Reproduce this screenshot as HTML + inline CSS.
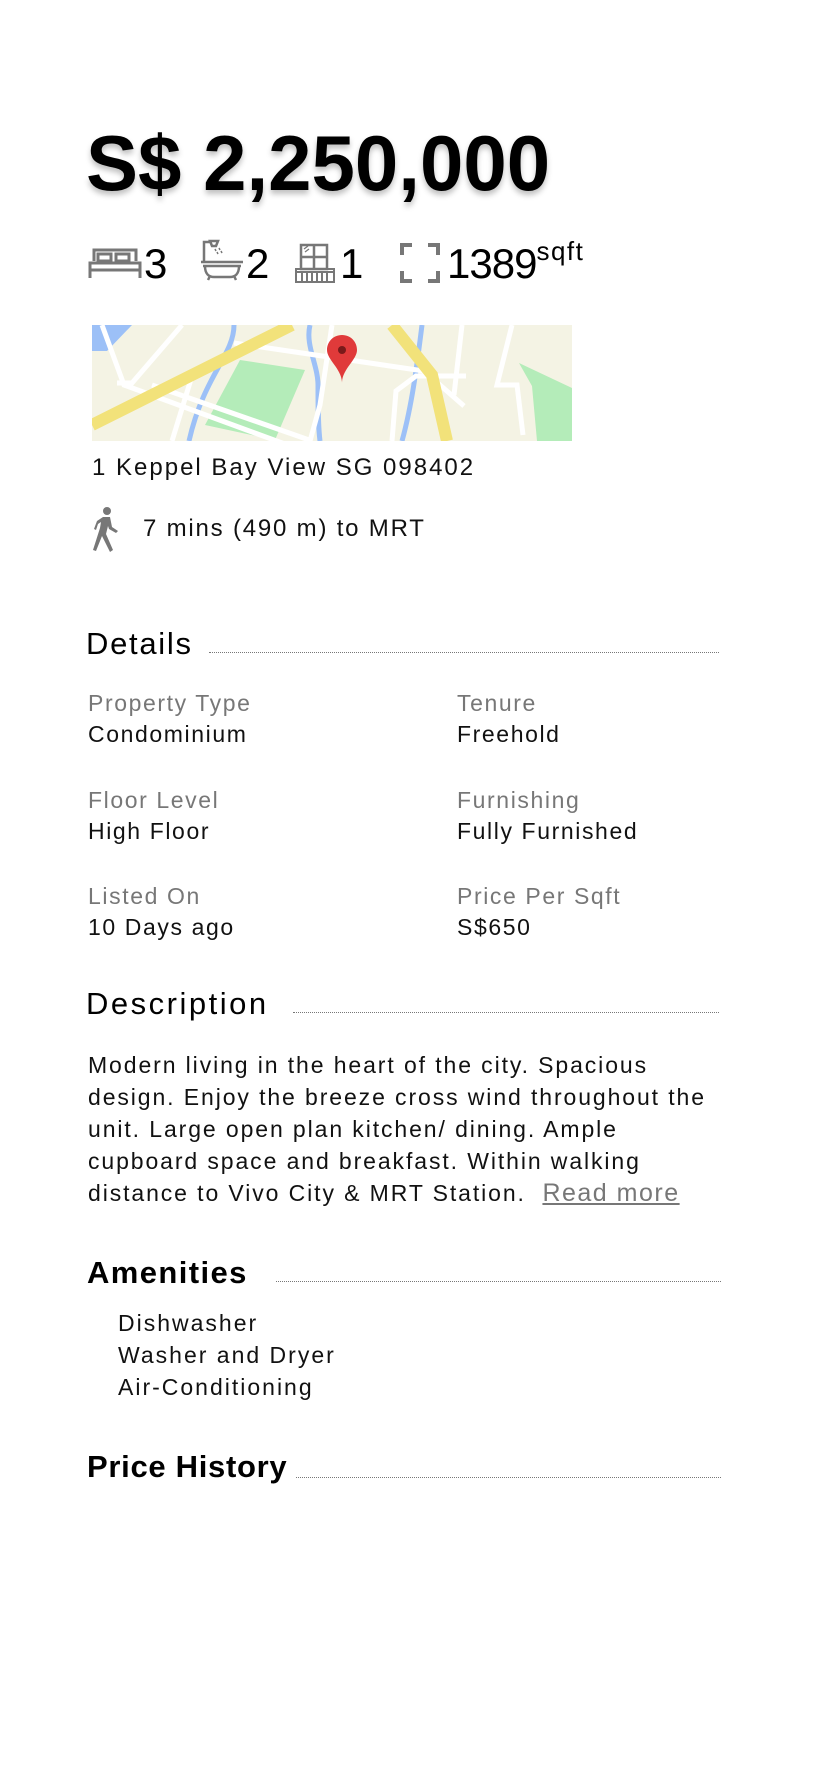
<!DOCTYPE html>
<html><head><meta charset="utf-8"><style>
*{margin:0;padding:0;box-sizing:border-box}
body{width:828px;height:1792px;background:#fff;font-family:"Liberation Sans",sans-serif;color:#111;position:relative;overflow:hidden}
.a{position:absolute;white-space:nowrap}
.price{left:86px;top:118px;font-size:78px;font-weight:bold;letter-spacing:0px;text-shadow:0 4px 6px rgba(0,0,0,.25);color:#000}
.num{font-size:42px;top:240px;color:#000}
.h{font-size:31px;color:#000}
.dot{position:absolute;border-top:1.5px dotted #777;height:0}
.lab{font-size:23px;color:#777;letter-spacing:1.6px}
.val{font-size:23px;color:#111;letter-spacing:1.6px}
.p{font-size:23px;letter-spacing:1.9px;line-height:32px}
</style></head><body>
<div class="a price">S$ 2,250,000</div>

<svg class="a" style="left:88px;top:246px" width="54" height="34" viewBox="0 0 54 34" fill="none" stroke="#777" stroke-width="3"><path d="M6 15V4h42v11M2 32V17h50v15M2 24h50"/><rect x="10" y="8" width="13" height="7"/><rect x="28" y="8" width="13" height="7"/></svg>
<div class="a num" style="left:144px">3</div>

<svg class="a" style="left:200px;top:238px" width="44" height="44" viewBox="0 0 44 44" fill="none" stroke="#777" stroke-width="2.5"><path d="M4 24V4h8M10 3h8l-2 5h-4z"/><path d="M15 11l1 2M19 10l1 2M17 14l1 2M21 13l1 2" stroke-width="1.5"/><path d="M1 24h42M3 28h38M5 28c0 8 4 11 9 11h16c5 0 9-3 9-11M10 38l-2 4M34 38l2 4"/></svg>
<div class="a num" style="left:246px">2</div>

<svg class="a" style="left:294px;top:243px" width="42" height="40" viewBox="0 0 42 40" fill="none" stroke="#777" stroke-width="2.5"><rect x="7" y="2" width="26" height="24"/><path d="M20 2v24M7 14h26"/><path d="M10 6l4-3M11 9l4-3" stroke-width="1.3"/><path d="M2 26h38v13H2zM2 29h38M8 29v10M13 29v10M18 29v10M23 29v10M28 29v10M33 29v10" stroke-width="2"/></svg>
<div class="a num" style="left:340px">1</div>

<svg class="a" style="left:400px;top:243px" width="40" height="40" viewBox="0 0 40 40" fill="none" stroke="#777" stroke-width="4"><path d="M12 2H2v10M28 2h10v10M2 28v10h10M38 28v10H28"/></svg>
<div class="a num" style="left:447px;letter-spacing:-1px">1389<sup style="font-size:26px;position:relative;top:-4px;vertical-align:top;letter-spacing:1.5px">sqft</sup></div>

<svg class="a" style="left:92px;top:325px" width="480" height="116" viewBox="0 0 480 116">
<rect width="480" height="116" fill="#f4f3e4"/>
<path d="M0 0h40L15 26H0z" fill="#9cc0f7"/>
<path d="M148 35l65 10-30 70-70-15z" fill="#b4ecb9"/>
<path d="M427 38l53 25v53h-35l-5-55z" fill="#b4ecb9"/>
<path d="M218 0c-5 20 8 40 8 60s0 40 2 56M142 0c0 30-30 50-45 116M330 0c-5 40-10 80-20 116" stroke="#9cc0f7" stroke-width="5" fill="none"/>
<path d="M10 0l22 60 180 66M60 60l160 56M240 0l-12 80-10 36M142 18l190 28 40 35M370 0l-8 70M420 0l-15 60 20 0 6 50M25 58h15L90 0M80 116l20-65M300 116l4-50 20-15h50" stroke="#fff" stroke-width="5" fill="none"/>
<path d="M0 100L200 0M300 0l40 50 15 66" stroke="#f2e27a" stroke-width="12" fill="none"/>
<path d="M250 10c-9 0-15 7-15 15 0 10 15 19 15 33 0-14 15-23 15-33 0-8-6-15-15-15z" fill="#e03a3a"/><circle cx="250" cy="25" r="4" fill="#7a1a1a"/>
</svg>

<div class="a val" style="left:92px;top:454px;font-size:24px;letter-spacing:2px">1 Keppel Bay View SG 098402</div>
<svg class="a" style="left:92px;top:506px" width="30" height="46" viewBox="0 0 30 46" fill="#777"><circle cx="15" cy="5" r="4"/><path d="M11 11h7l2 10 6 4-2 2-7-4-1-3-2 8 7 16-3 2-8-16-6 15-3-1 7-22 1-6-3 2-2 6-2-1 3-8z"/></svg>
<div class="a val" style="left:143px;top:515px;font-size:24px;letter-spacing:1.8px">7 mins (490 m) to MRT</div>

<div class="a h" style="left:86px;top:626px;letter-spacing:1.7px">Details</div><div class="dot" style="left:209px;width:510px;top:652px"></div>

<div class="a lab" style="left:88px;top:690px">Property Type</div><div class="a val" style="left:88px;top:721px">Condominium</div>
<div class="a lab" style="left:457px;top:690px">Tenure</div><div class="a val" style="left:457px;top:721px">Freehold</div>
<div class="a lab" style="left:88px;top:787px">Floor Level</div><div class="a val" style="left:88px;top:818px">High Floor</div>
<div class="a lab" style="left:457px;top:787px">Furnishing</div><div class="a val" style="left:457px;top:818px">Fully Furnished</div>
<div class="a lab" style="left:88px;top:883px">Listed On</div><div class="a val" style="left:88px;top:914px">10 Days ago</div>
<div class="a lab" style="left:457px;top:883px">Price Per Sqft</div><div class="a val" style="left:457px;top:914px">S$650</div>

<div class="a h" style="left:86px;top:986px;letter-spacing:2.5px">Description</div><div class="dot" style="left:293px;width:426px;top:1012px"></div>
<div class="a p" style="left:88px;top:1049px">Modern living in the heart of the city. Spacious<br>design. Enjoy the breeze cross wind throughout the<br>unit. Large open plan kitchen/ dining. Ample<br>cupboard space and breakfast. Within walking<br>distance to Vivo City &amp; MRT Station.&nbsp; <span style="color:#777;text-decoration:underline;font-size:25px;letter-spacing:1.5px">Read more</span></div>

<div class="a h" style="left:87px;top:1255px;font-weight:bold;letter-spacing:1.4px">Amenities</div><div class="dot" style="left:276px;width:445px;top:1281px"></div>
<div class="a p" style="left:118px;top:1307px;letter-spacing:2px">Dishwasher<br>Washer and Dryer<br>Air-Conditioning</div>

<div class="a h" style="left:87px;top:1449px;font-weight:bold;letter-spacing:.7px">Price History</div><div class="dot" style="left:296px;width:425px;top:1477px"></div>
</body></html>
